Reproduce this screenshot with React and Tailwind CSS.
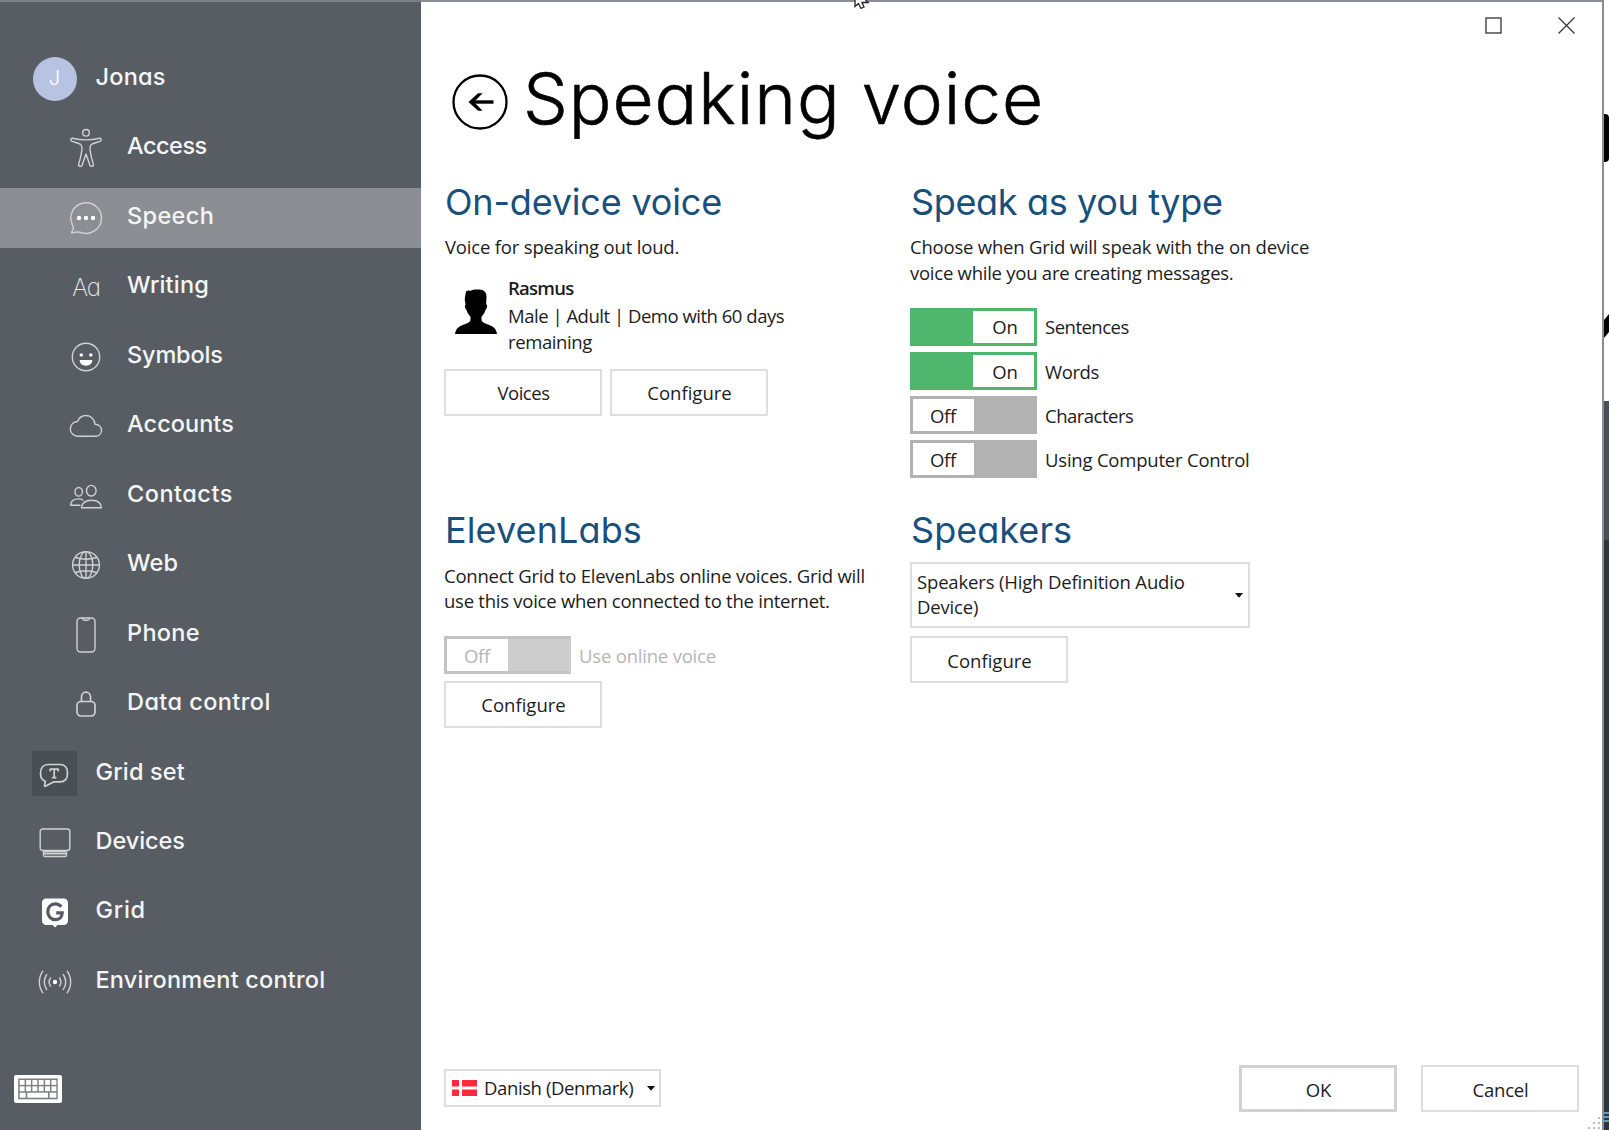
import React from 'react';

const Svg = ({ w, h, children, className = '' }) => (
  <svg width={w} height={h} viewBox={`0 0 ${w} ${h}`} fill="none" stroke="#cfd1d3" strokeWidth="1.400" strokeLinecap="round" strokeLinejoin="round" className={`shrink-0 ${className}`}>
    {children}
  </svg>
);

const icons = {
  access: (
    <Svg w={32} h={40}>
      <circle cx="16" cy="4.8" r="3.3" />
      <path d="M2.5 10.2C.5 9.8.2 12.8 2 13.4c3.500 1.100 6 1.600 8.200 2.800 1.800 1 2 3.300 1.600 6.300C11.200 27.500 10 32 8.600 36.500c-.6 2 2.900 2.600 3.500.7L16 26l3.900 11.200c.6 1.900 4.100 1.300 3.500-.7-1.400-4.500-2.600-9-3.200-14-.4-3-.2-5.300 1.600-6.300 2.200-1.200 4.700-1.700 8.200-2.800 1.800-.6 1.500-3.600-.5-3.200-9 2.200-18 2.200-27 0z" />
    </Svg>
  ),
  speech: (
    <Svg w={34} h={34}>
      <path d="M3.300 23.600A15.300 15.300 0 1 1 12 31.500c-2.700-.8-5.600-.4-8.300.4-1 .2-1.400-.6-.7-1.300 1.900-2.200 1.600-4.600.3-7z" />
      <g fill="#fff" stroke="none"><circle cx="10" cy="17" r="2.200" /><circle cx="17" cy="17" r="2.200" /><circle cx="24" cy="17" r="2.200" /></g>
    </Svg>
  ),
  symbols: (
    <Svg w={30} h={30}>
      <circle cx="15" cy="15" r="13.700" />
      <g fill="#fff" stroke="none"><rect x="8.700" y="11.400" width="3.200" height="3.200" rx="1" /><rect x="18.200" y="11.400" width="3.200" height="3.200" rx="1" /><path d="M8.700 18h12.600c0 3.600-2.600 5.700-6.300 5.700S8.700 21.600 8.700 18z" /></g>
    </Svg>
  ),
  accounts: (
    <Svg w={34} h={24}>
      <path d="M9 22.300a7.400 7.400 0 0 1-.6-14.800C10 3.700 13.300 1.500 17 1.500c4.800 0 8.600 3.700 9 8.800 3.800.2 6.500 2.700 6.500 6 0 3.500-2.700 6-6.300 6z" />
    </Svg>
  ),
  contacts: (
    <Svg w={34} h={25} className="mt-px">
      <ellipse cx="9.700" cy="7.800" rx="3.700" ry="4.300" />
      <ellipse cx="22.300" cy="6.700" rx="4.800" ry="5.300" />
      <path d="M11 21.200H1.500c.3-4 3.600-6.300 8-6.300 1.600 0 3 .3 4.200 1M12.500 23.700h20c-.5-4.800-4.500-7.500-10-7.500s-9.500 2.700-10 7.500z" />
    </Svg>
  ),
  web: (
    <Svg w={30} h={30}>
      <circle cx="15" cy="15" r="13.400" />
      <ellipse cx="15" cy="15" rx="6.800" ry="13.400" />
      <path d="M15 1.600v26.800M1.600 15h26.800M4.500 7.500c6.500 2.200 14.500 2.200 21 0M4.500 22.500c6.500-2.200 14.500-2.200 21 0" />
    </Svg>
  ),
  phone: (
    <Svg w={20} h={36}>
      <rect x="1" y="1" width="18" height="34" rx="3.500" />
      <path d="M6.500 1.300c.3 1.600 1 1.900 2 1.900h3c1 0 1.700-.3 2-1.900" />
    </Svg>
  ),
  data: (
    <Svg w={20} h={26}>
      <rect x="1" y="10.500" width="18" height="14.500" rx="4" strokeWidth="1.700" />
      <path d="M5.500 10.500V6a4.500 4.800 0 0 1 9 0v4.500" strokeWidth="1.700" />
    </Svg>
  ),
  gridset: (
    <div className="flex size-[45px] items-center justify-center bg-[#4a4f53]">
      <Svg w={30} h={26} className="mt-1 mr-px">
        <path d="M9 1.500h12c4.600 0 7.500 3.200 7.500 8.700s-2.900 8.700-7.500 8.700h-6.500l-8.200 4.300c-.6.300-.9-.2-.7-.8l.6-4.300C3.300 17.300 1.500 14 1.500 10.200 1.500 4.700 4.400 1.500 9 1.500z" strokeWidth="1.700" />
        <path d="M11.200 7.700V6.200h8v1.500M15.200 6.200v8.500M13.700 14.700h3" strokeWidth="1.700" />
      </Svg>
    </div>
  ),
  devices: (
    <Svg w={32} h={30}>
      <rect x="1.200" y="1" width="29.600" height="21.500" rx="2.500" />
      <path d="M4.500 23.700h23v3.500c0 .8-.5 1.300-1.300 1.300H5.800c-.8 0-1.300-.5-1.300-1.300zM5 25.800h22" />
    </Svg>
  ),
  grid: (
    <Svg w={28} h={30} className="mt-0.5">
      <path d="M6 0.500h16c3.500 0 5 1.500 5 5v16.500c0 3.500-1.500 5-5 5h-5.500L14 29.500 11.500 27H6c-3.500 0-5-1.500-5-5V5.500c0-3.500 1.500-5 5-5z" fill="#fff" stroke="none" />
      <path d="M20.300 8.700C18.800 6.800 16.700 5.800 14.200 5.800c-4.300 0-7.400 3.300-7.400 7.900s3.100 7.900 7.400 7.900c4.200 0 7-2.700 7-6.800h-6" stroke="#565b61" strokeWidth="3.200" strokeLinecap="butt" strokeLinejoin="miter" />
    </Svg>
  ),
  env: (
    <Svg w={34} h={24}>
      <circle cx="17" cy="12" r="2.200" fill="#fff" stroke="none" />
      <path d="M12.500 8c-1.700 2.400-1.700 5.600 0 8M8.700 4.500c-3.200 4.500-3.200 10.500 0 15M4.800 1.200c-4.600 6.500-4.600 15.100 0 21.600M21.500 8c1.700 2.400 1.700 5.600 0 8M25.300 4.500c3.200 4.500 3.200 10.500 0 15M29.200 1.200c4.600 6.500 4.600 15.100 0 21.600" />
    </Svg>
  ),
};

const nav = [
  { label: 'Jonas', track: 'tracking-[0.22px]', icon: <div className="flex size-11 items-center justify-center rounded-full bg-[#b8c3e4] pb-px text-[20px] font-light text-white">J</div> },
  { label: 'Access', track: 'tracking-[-0.5px]', sub: true, icon: icons.access },
  { label: 'Speech', track: 'tracking-[0.37px]', sub: true, active: true, icon: icons.speech },
  { label: 'Writing', track: 'tracking-[0.18px]', sub: true, icon: <span className="pt-px text-[24px] leading-6 font-extralight tracking-[-1px] text-[#e8e9ea]">Aa</span> },
  { label: 'Symbols', track: 'tracking-[-0.16px]', sub: true, icon: icons.symbols },
  { label: 'Accounts', track: 'tracking-[0.05px]', sub: true, icon: icons.accounts },
  { label: 'Contacts', track: 'tracking-[0.5px]', sub: true, icon: icons.contacts },
  { label: 'Web', track: 'tracking-[0.1px]', sub: true, icon: icons.web },
  { label: 'Phone', track: 'tracking-[0.3px]', sub: true, icon: icons.phone },
  { label: 'Data control', track: 'tracking-[0.42px]', sub: true, icon: icons.data },
  { label: 'Grid set', track: 'tracking-[0.17px]', icon: icons.gridset },
  { label: 'Devices', track: 'tracking-[-0.06px]', icon: icons.devices },
  { label: 'Grid', track: 'tracking-[0.75px]', icon: icons.grid },
  { label: 'Environment control', track: 'tracking-[0.2px]', icon: icons.env },
];

function NavItem({ label, track, icon, sub, active }) {
  return (
    <div className={`flex h-[60px] shrink-0 items-center ${sub ? 'pl-[64px]' : 'pl-[32px]'} ${active ? 'bg-[#8b8e92]' : ''}`}>
      <div className={`flex shrink-0 justify-center ${sub ? 'w-11' : 'w-[45px]'}`}>{icon}</div>
      <span className={`pb-[4px] text-[23.5px] leading-7 font-medium whitespace-nowrap text-[#f4f5f5] ${sub ? 'ml-[19px]' : 'ml-[18.5px]'} ${track}`}>{label}</span>
    </div>
  );
}

function Keyboard() {
  const keys = [];
  for (let r = 0; r < 2; r++) for (let c = 0; c < 6; c++) keys.push(<rect key={`${r}${c}`} x={5.700 + c * 6.350} y={5 + r * 6.300} width="4.900" height="4.900" fill="#fff" />);
  return (
    <svg width="48" height="28" viewBox="0 0 48 28" className="shrink-0">
      <rect width="48" height="28" rx="2" fill="#fff" />
      <rect x="4.200" y="3.500" width="39.500" height="20.800" fill="#7b7e82" />
      {keys}
      <rect x="5.700" y="17.700" width="6" height="5" fill="#fff" />
      <rect x="13.300" y="17.700" width="20.700" height="5" fill="#fff" />
      <rect x="35.600" y="17.700" width="6.700" height="5" fill="#fff" />
    </svg>
  );
}

const Heading = ({ children, track, className = 'pt-px' }) => (
  <h2 className={`h-11 pl-px text-[36px] leading-[44px] whitespace-nowrap text-[#184f7c] font-['Inter',sans-serif] [font-feature-settings:'cv11'] ${track} ${className}`}>{children}</h2>
);

const Button = ({ children, track = 'tracking-normal', strong, className = '' }) => (
  <button className={`flex h-[47px] w-[158px] shrink-0 items-center justify-center bg-white pt-0.5 pl-px ${strong ? 'border-[3px] border-[#d2d2d2]' : 'border-2 border-[#dedede]'} ${track} ${className}`}>{children}</button>
);

function Toggle({ on, disabled, label, track }) {
  const body = on ? 'bg-[#4eb66d] border-[#4eb66d] justify-end' : disabled ? 'bg-[#cdcdcd] border-[#c3c3c3] border-r-[#cdcdcd]' : 'bg-[#b2b2b2] border-[#b2b2b2]';
  return (
    <div className={`flex h-[38px] items-center ${disabled ? 'text-[#b6b6b6]' : ''}`}>
      <div className={`flex h-[38px] w-[127px] border-[3px] ${body}`}>
        <div className={`flex w-[61px] items-center justify-center bg-white pt-px ${on ? 'pl-[3px]' : 'pr-px tracking-[-0.3px]'}`}>{on ? 'On' : 'Off'}</div>
      </div>
      <span className={`ml-2 pt-px whitespace-nowrap ${track}`}>{label}</span>
    </div>
  );
}

const Caret = () => (
  <svg width="8" height="5" viewBox="0 0 8 5" className="shrink-0"><path d="M0 0h8L4 4.800z" fill="#111" /></svg>
);

export default function App() {
  return (
    <div className="relative flex h-[1130px] w-[1609px] overflow-hidden bg-white text-[18.5px] leading-[25.5px] text-[#1c1c1c] font-['Open_Sans',sans-serif]">
      <aside className="flex w-[421px] shrink-0 flex-col border-t-2 border-[#7d8186] bg-[#585d63] font-['Inter',sans-serif] [font-feature-settings:'cv11']">
        <nav className="flex flex-col gap-[9.46px] pt-[47px]">
          {nav.map((n) => <NavItem key={n.label} {...n} />)}
        </nav>
        <div className="mt-auto pb-[27px] pl-[14px]"><Keyboard /></div>
      </aside>

      <main className="flex w-[1183px] shrink-0 flex-col border-t-2 border-r-2 border-[#8b8e94]">
        <div className="flex h-[53px] justify-end gap-[56px] pt-[15px] pr-[27px]">
          <svg width="17" height="17" viewBox="0 0 17 17"><rect x="1" y="1" width="15" height="15" fill="none" stroke="#333" strokeWidth="1.300" /></svg>
          <svg width="17" height="17" viewBox="0 0 17 17"><path d="M.5.5l16 16M16.500.5l-16 16" stroke="#333" strokeWidth="1.200" /></svg>
        </div>

        <header className="flex h-[86px] pl-[31px]">
          <svg width="56" height="56" viewBox="0 0 56 56" className="mt-[19px]" fill="none" stroke="#000">
            <circle cx="28" cy="28" r="26.500" strokeWidth="2.300" />
            <path d="M41.500 28H19" strokeWidth="3.400" />
            <path d="M16.500 28L26 19.300h4.600L22 28l8.600 8.700H26z" fill="#000" stroke="none" />
          </svg>
          <h1 className="ml-[15px] text-[71px] leading-[86px] font-light tracking-[0.95px] whitespace-nowrap text-black font-['Inter',sans-serif] [-webkit-text-stroke:0.6px_black] [font-feature-settings:'cv11']">Speaking voice</h1>
        </header>

        <div className="grid grid-cols-[466px_1fr] grid-rows-[329px_1fr] pt-[38px] pl-[23px]">
          <section>
            <Heading track="tracking-[-0.18px]">On-device voice</Heading>
            <p className="mt-[11px] pl-px tracking-[-0.18px]">Voice for speaking out loud.</p>
            <div className="mt-[15px] flex h-[80px]">
              <svg width="44" height="46" viewBox="0 0 44 46" className="mt-[14px] ml-[10px] shrink-0">
                <path d="M12 2.500L14.500 1.200l1.500.8C19 .5 23 .3 27 .8c3.500.5 5.500 3 5.500 7 0 3-.5 5-.2 7.700 1.400.6 1 3.600-.8 5.500-.8 3-2.300 5-4 6.700v3.500c1 3 6.500 3.800 10.500 6 3 1.700 4.500 4 5 7.800H1c.5-3.800 2-6.100 5-7.800 4-2.200 9.500-3 10.500-6v-3.500c-1.700-1.700-3.200-3.700-4-6.700-1.800-1.900-2.200-4.900-.8-5.500-.7-2.500-1.200-5-.7-7.500z" fill="#000" />
              </svg>
              <div className="ml-[10px]">
                <p className="font-semibold tracking-[-0.74px]">Rasmus</p>
                <p className="mt-[3px] w-[300px] tracking-[-0.48px]">Male | Adult | Demo with 60 days<br /><span className="tracking-[-0.4px]">remaining</span></p>
              </div>
            </div>
            <div className="mt-[14px] flex gap-2">
              <Button track="tracking-[-0.46px]">Voices</Button>
              <Button>Configure</Button>
            </div>
          </section>

          <section>
            <Heading track="tracking-[-0.35px]">Speak as you type</Heading>
            <p className="mt-[11px] tracking-[-0.21px]">Choose when Grid will speak with the on device<br /><span className="tracking-[-0.25px]">voice while you are creating messages.</span></p>
            <div className="mt-[22.500px] flex flex-col gap-[6.300px]">
              <Toggle on label="Sentences" track="tracking-[-0.5px]" />
              <Toggle on label="Words" track="tracking-[-0.4px]" />
              <Toggle label="Characters" track="tracking-[-0.5px]" />
              <Toggle label="Using Computer Control" track="tracking-[-0.21px]" />
            </div>
          </section>

          <section>
            <Heading className="" track="tracking-[0.1px]">ElevenLabs</Heading>
            <p className="mt-[10.500px] tracking-[-0.237px]">Connect Grid to ElevenLabs online voices. Grid will<br /><span className="tracking-[-0.253px]">use this voice when connected to the internet.</span></p>
            <div className="mt-[22.500px] flex flex-col gap-[6.500px]">
              <Toggle disabled label="Use online voice" track="tracking-[-0.2px]" />
              <Button>Configure</Button>
            </div>
          </section>

          <section>
            <Heading className="" track="tracking-[0.05px]">Speakers</Heading>
            <div className="mt-[10px] flex h-[66px] w-[340px] items-center justify-between border-2 border-[#dedede] pr-[5px] pl-[5px]">
              <p className="pb-[2px] tracking-[-0.165px]">Speakers (High Definition Audio<br />Device)</p>
              <Caret />
            </div>
            <Button className="mt-[8px]">Configure</Button>
          </section>
        </div>

        <footer className="mt-auto flex items-end pb-[18px] pl-[23px]">
          <div className="mb-[5px] flex h-[38px] w-[217px] items-center border-2 border-[#dedede] pl-[6px]">
            <svg width="25" height="16" viewBox="0 0 25 16" className="shrink-0" fill="#fb2a3c"><path d="M0 0h7v6.500H0zM10 0h15v6.500H10zM0 9.500h7V16H0zM10 9.500h15V16H10z" /></svg>
            <span className="mr-[14px] ml-[7px] whitespace-nowrap tracking-[-0.39px]">Danish (Denmark)</span>
            <Caret />
          </div>
          <div className="mr-[23px] ml-auto flex gap-[24px]">
            <Button strong>OK</Button>
            <Button track="tracking-[-0.2px]">Cancel</Button>
          </div>
        </footer>
      </main>

      <div className="flex flex-1 flex-col bg-white">
        <div className="mt-[114px] h-[48px] rounded-r-sm bg-black" />
        <svg width="5" height="24" viewBox="0 0 5 24" className="mt-[152px]"><path d="M0 6l5-6v18l-5 6z" fill="#000" /></svg>
        <div className="mt-[63px] h-[139px] bg-[#454f58]" />
        <div className="flex flex-1 flex-col justify-end bg-[#2c353d]">
          <div className="mb-[8px] flex h-[10px] flex-col justify-between">
            <div className="h-0.5 bg-[#5b9fc4]" /><div className="h-0.5 bg-[#5b9fc4]" /><div className="h-0.5 bg-[#5b9fc4]" />
          </div>
        </div>
      </div>

      <svg width="16" height="10" viewBox="0 0 16 10" className="absolute top-0 left-[854px]"><path d="M1 0v6.500L4.500 3.500 7 8.500l3-1.500L8 2.500h6L11.500 0" fill="#fff" stroke="#222" strokeWidth="1.300" /></svg>
      <svg width="14" height="14" viewBox="0 0 14 14" className="absolute right-[7px] bottom-0" fill="#b4bed2"><path d="M10 1h2v2h-2zM5 6h2v2H5zM10 6h2v2h-2zM0 11h2v2H0zM5 11h2v2H5zM10 11h2v2h-2z" /></svg>
    </div>
  );
}
